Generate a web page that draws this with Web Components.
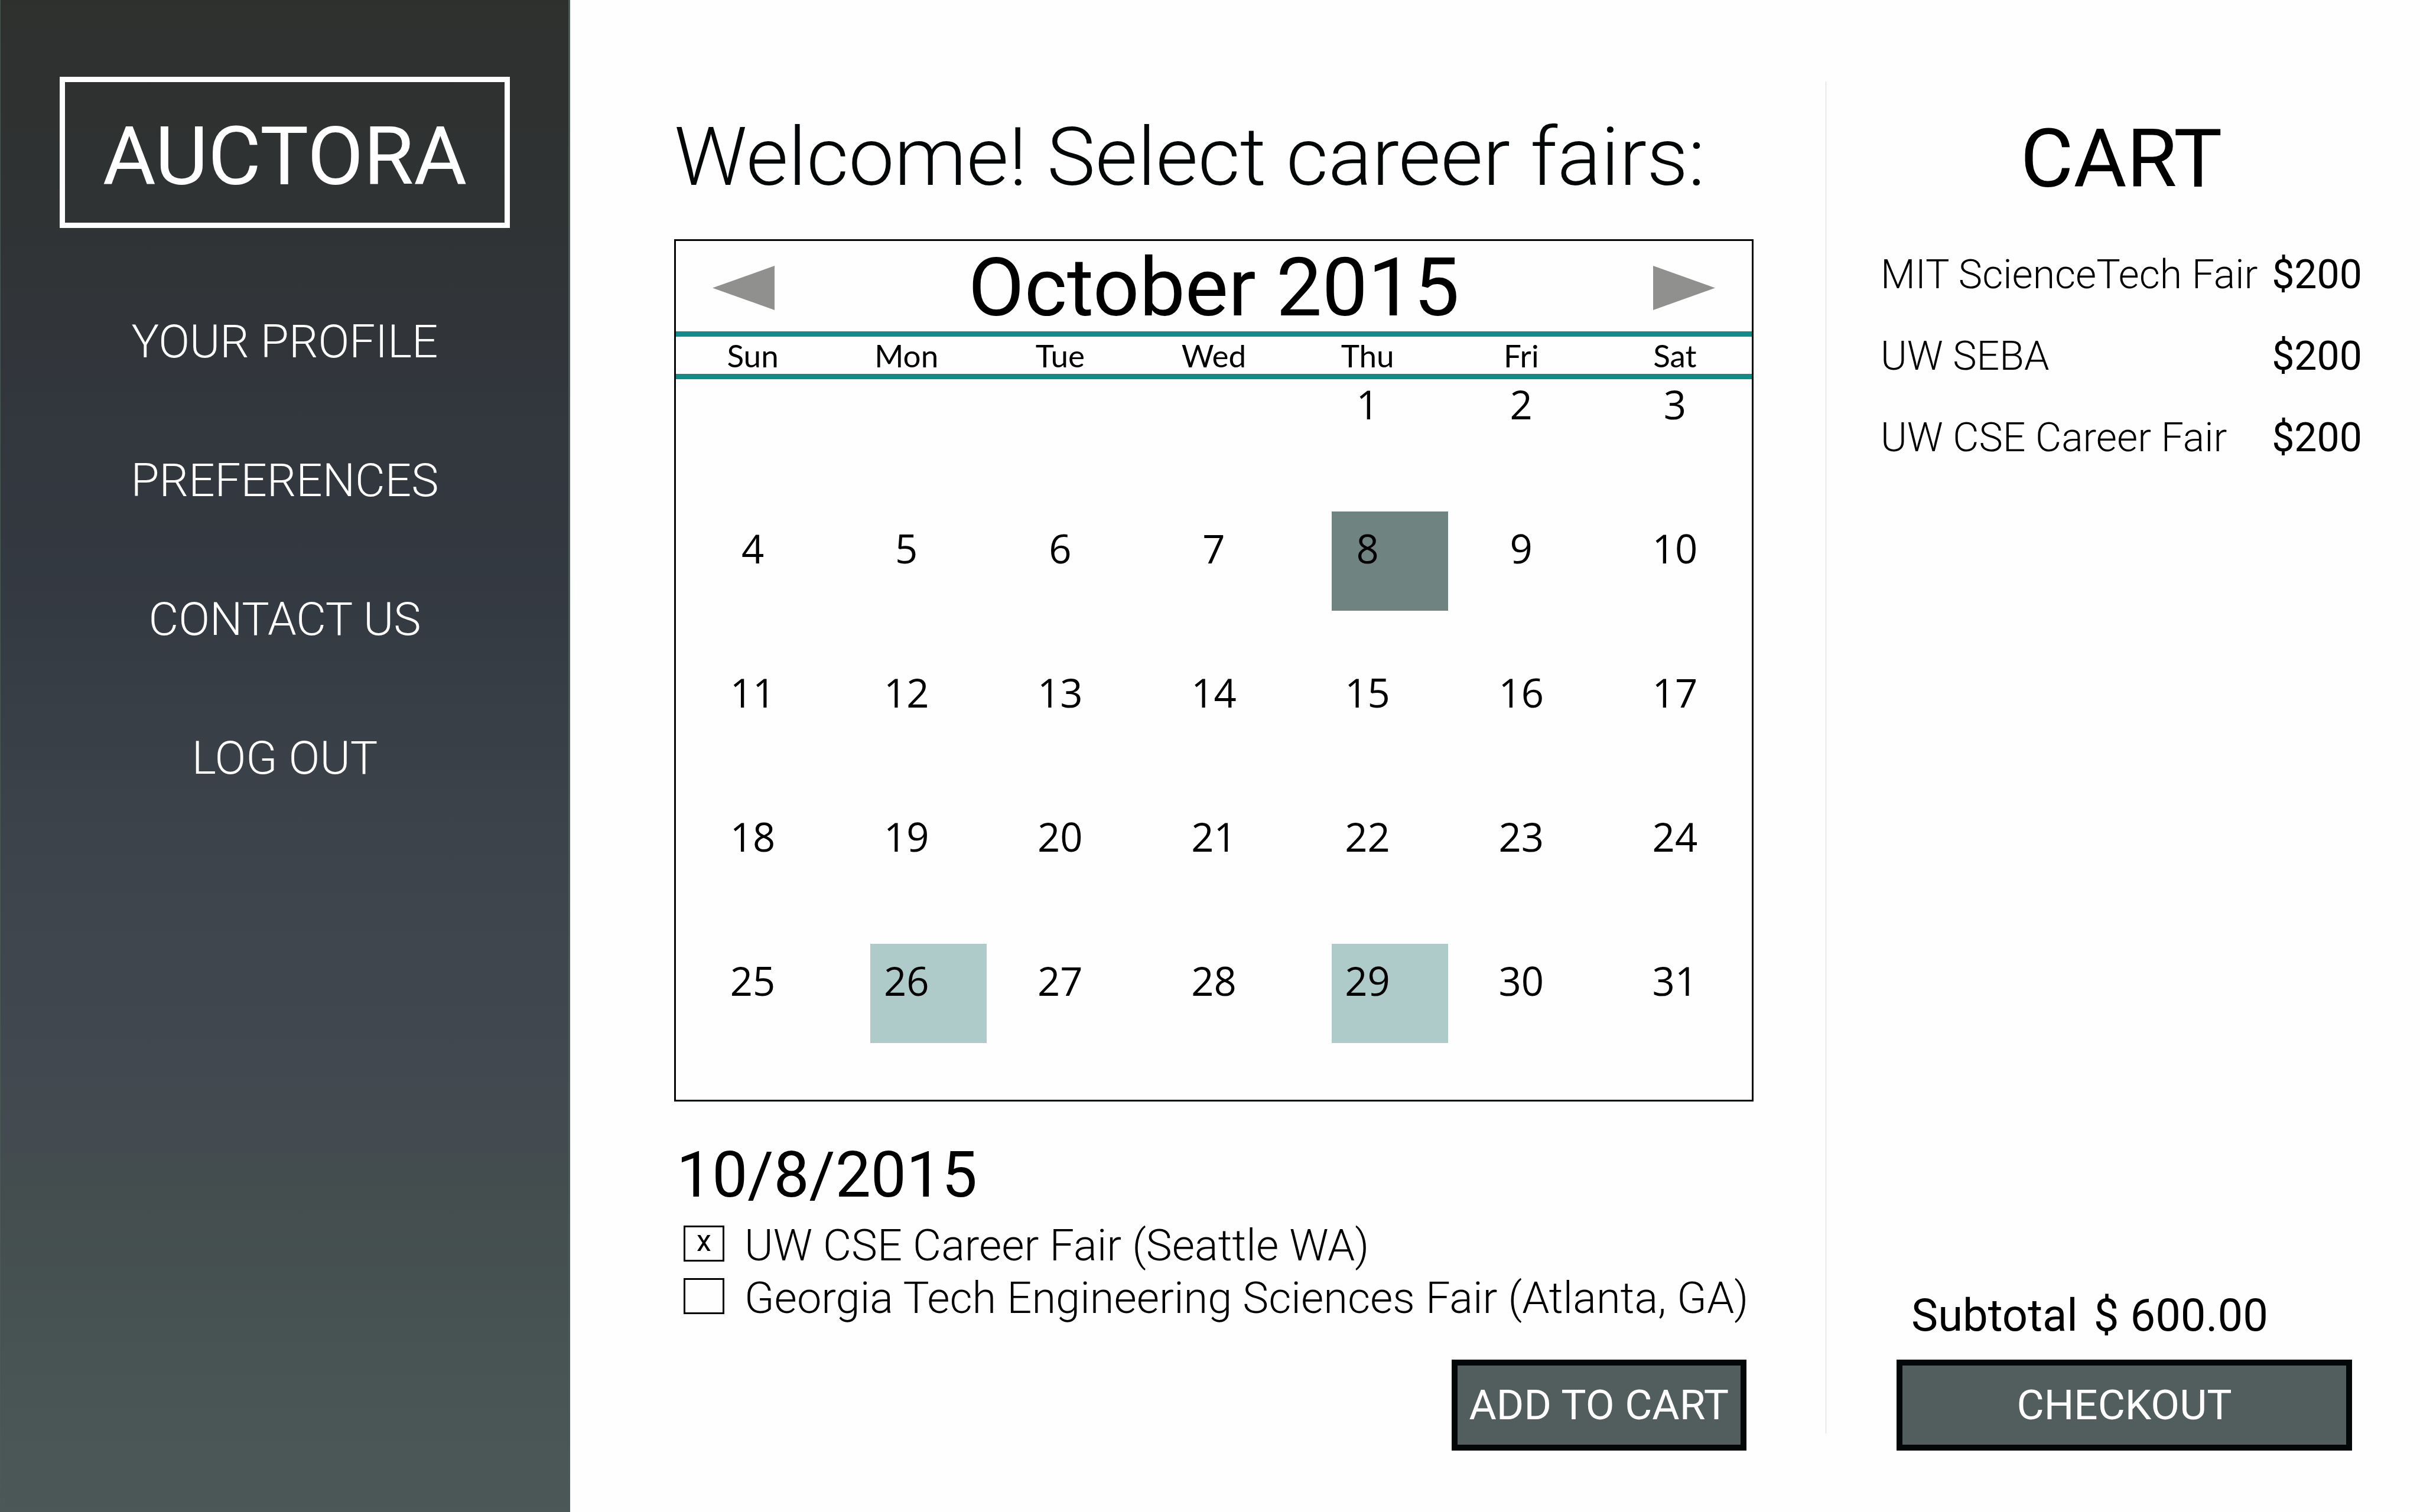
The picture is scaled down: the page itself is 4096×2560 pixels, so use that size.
<!DOCTYPE html>
<html lang="en">
<head>
<meta charset="utf-8">
<title>Auctora – Select career fairs</title>
<style>
  body { margin: 0; background: #fefefe; color: #000; font-family: Roboto, "Liberation Sans", sans-serif; }
</style>
</head>
<body>
<auctora-app>
  <side-bar slot="sidebar">
    <nav-link href="#profile">YOUR PROFILE</nav-link>
    <nav-link href="#preferences">PREFERENCES</nav-link>
    <nav-link href="#contact">CONTACT US</nav-link>
    <nav-link href="#logout">LOG OUT</nav-link>
  </side-bar>
  <fair-picker heading="Welcome! Select career fairs:" date="10/8/2015">
    <month-calendar slot="calendar" label="October 2015" start="4" days="31" selected="8" marked="26,29"></month-calendar>
    <fair-option checked>UW CSE Career Fair (Seattle WA)</fair-option>
    <fair-option>Georgia Tech Engineering Sciences Fair (Atlanta, GA)</fair-option>
    <action-button slot="action">ADD TO CART</action-button>
  </fair-picker>
  <cart-panel slot="cart" total="$ 600.00">
    <cart-item price="$200">MIT ScienceTech Fair</cart-item>
    <cart-item price="$200">UW SEBA</cart-item>
    <cart-item price="$200">UW CSE Career Fair</cart-item>
    <action-button slot="action">CHECKOUT</action-button>
  </cart-panel>
</auctora-app>

<script>
class BaseElement extends HTMLElement {
  constructor() {
    super();
    this.attachShadow({ mode: "open" });
  }
  connectedCallback() {
    this.shadowRoot.innerHTML =
      `<style>*, ::before { box-sizing: border-box; } h1, h2, ul, p { margin: 0; padding: 0; }</style>` + this.render();
  }
}

customElements.define("auctora-app", class extends BaseElement {
  render() {
    return `
    <style>
      :host { display: flex; min-height: 100vh; }
      .side { flex: none; width: 965px; display: flex; }
      main { flex: 1; min-width: 0; padding: 186px 122px 104px 176px; }
      .rule { flex: none; width: 1px; margin: 138px 0 133px; background: #dcdcdc; }
      .cart { flex: none; width: 1005px; display: flex; }
    </style>
    <div class="side"><slot name="sidebar"></slot></div>
    <main><slot></slot></main>
    <div class="rule"></div>
    <div class="cart"><slot name="cart"></slot></div>`;
  }
});

customElements.define("side-bar", class extends BaseElement {
  render() {
    return `
    <style>
      :host {
        flex: 1; box-sizing: border-box; padding: 130px 99px 0 100px; color: #fff;
        border: solid #4b5957; border-width: 0 3px 0 1px;
        background: linear-gradient(#2e302e 0%, #303334 14%, #32363d 27%, #343a42 40%, #3b4249 53%, #41474f 67%, #434a50 75%, #434d4e 78%, #4c5857 100%);
      }
      .logo { border: 9px solid #fff; padding-top: 14px; text-align: center; font-size: 138px; line-height: 224px; }
      nav { display: flex; flex-direction: column; align-items: center; gap: 135px; margin-top: 143px; }
    </style>
    <div class="logo">AUCTORA</div>
    <nav><slot></slot></nav>`;
  }
});

customElements.define("nav-link", class extends BaseElement {
  render() {
    return `
    <style>
      :host { display: block; }
      a { display: block; color: inherit; text-decoration: none; font-size: 78px; font-weight: 300; line-height: 100px; white-space: nowrap; }
    </style>
    <a href="${this.getAttribute("href")}"><slot></slot></a>`;
  }
});

customElements.define("fair-picker", class extends BaseElement {
  render() {
    return `
    <style>
      :host { display: block; }
      h1 { font-size: 138px; font-weight: 300; line-height: 160px; white-space: nowrap; color: #040707; }
      .calendar { margin-top: 59px; }
      h2 { margin-top: 63px; padding-left: 4px; font-size: 107px; font-weight: 450; line-height: 124px; }
      .options { margin-top: 12px; padding-left: 16px; }
      .action { display: flex; justify-content: flex-end; margin-top: 60px; padding-right: 12px; }
    </style>
    <h1>${this.getAttribute("heading")}</h1>
    <div class="calendar"><slot name="calendar"></slot></div>
    <h2>${this.getAttribute("date")}</h2>
    <div class="options"><slot></slot></div>
    <div class="action"><slot name="action"></slot></div>`;
  }
});

customElements.define("month-calendar", class extends BaseElement {
  render() {
    const start = +this.getAttribute("start");
    const days = +this.getAttribute("days");
    const selected = this.getAttribute("selected");
    const marked = this.getAttribute("marked").split(",");
    let rows = "";
    for (let week = 0; week * 7 < start + days; week++) {
      rows += "<tr>";
      for (let col = 0; col < 7; col++) {
        const day = week * 7 + col - start + 1;
        const state = String(day) === selected ? "selected" : marked.includes(String(day)) ? "marked" : "";
        rows += day < 1 || day > days ? "<td></td>"
          : `<td><button type="button" class="${state}"><span>${day}</span></button></td>`;
      }
      rows += "</tr>";
    }
    const names = ["Sun", "Mon", "Tue", "Wed", "Thu", "Fri", "Sat"];
    return `
    <style>
      :host { display: block; box-sizing: border-box; border: 3px solid #040707; }
      header { display: flex; align-items: center; justify-content: space-between; padding: 6px 62px 0; }
      h2 { font-size: 138px; font-weight: 450; line-height: 147px; white-space: nowrap; }
      button { border: 0; padding: 0; background: none; color: inherit; }
      svg { display: block; width: 105px; height: 75px; fill: #90908e; }
      table { width: 100%; table-layout: fixed; border-spacing: 0; }
      th, td { padding: 0; vertical-align: top; }
      th { height: 81px; border: solid #128c8a; border-width: 9px 0; font: 400 53px/63px Lato, sans-serif; }
      td { height: 244px; }
      tbody tr:first-child td { height: 224px; }
      tbody tr:last-child td { height: 264px; }
      td button { display: grid; grid-template-columns: minmax(0, 1fr); width: 100%; font: 400 67px/84px "Open Sans", sans-serif; }
      td span { grid-area: 1 / 1; padding-top: 20px; text-align: center; }
      tbody tr:first-child span { padding-top: 0; }
      .selected::before, .marked::before { content: ""; grid-area: 1 / 1; width: 197px; height: 168px; margin-left: 69px; }
      .selected::before { background: #6f8481; }
      .marked::before { background: #aecbc9; }
    </style>
    <header>
      <button type="button" aria-label="Previous month"><svg viewBox="0 0 105 75"><path d="M0 37.500L105 0V75Z"/></svg></button>
      <h2>${this.getAttribute("label")}</h2>
      <button type="button" aria-label="Next month"><svg viewBox="0 0 105 75"><path d="M105 37.500L0 0V75Z"/></svg></button>
    </header>
    <table>
      <thead><tr>${names.map(n => `<th scope="col">${n}</th>`).join("")}</tr></thead>
      <tbody>${rows}</tbody>
    </table>`;
  }
});

customElements.define("fair-option", class extends BaseElement {
  render() {
    return `
    <style>
      :host { display: block; }
      label { display: flex; align-items: center; gap: 34px; font-size: 74px; font-weight: 300; line-height: 89px; white-space: nowrap; }
      .box { display: grid; width: 69px; height: 61px; margin-bottom: 6px; }
      input { grid-area: 1 / 1; appearance: none; margin: 0; border: 3px solid #000; }
      .mark { grid-area: 1 / 1; visibility: hidden; pointer-events: none; text-align: center; font-size: 50px; font-weight: 400; line-height: 52px; }
      input:checked + .mark { visibility: visible; }
    </style>
    <label for="pick">
      <span class="box"><input id="pick" type="checkbox" ${this.hasAttribute("checked") ? "checked" : ""}>${this.hasAttribute("checked") ? `<span class="mark" aria-hidden="true">x</span>` : ""}</span>
      <slot></slot>
    </label>`;
  }
});

customElements.define("cart-panel", class extends BaseElement {
  render() {
    return `
    <style>
      :host { flex: 1; box-sizing: border-box; display: flex; flex-direction: column; padding: 189px 98px 104px 92px; }
      h2 { text-align: center; font-size: 138px; font-weight: 450; line-height: 160px; }
      .items { display: flex; flex-direction: column; gap: 58px; margin-top: 76px; }
      .total { display: flex; gap: 27px; margin-top: auto; padding-left: 52px; font-size: 76px; font-weight: 450; line-height: 88px; }
      .action { display: grid; margin: 31px 17px 0 27px; }
    </style>
    <h2>CART</h2>
    <div class="items" role="list"><slot></slot></div>
    <p class="total"><span>Subtotal</span><output>${this.getAttribute("total")}</output></p>
    <div class="action"><slot name="action"></slot></div>`;
  }
});

customElements.define("cart-item", class extends BaseElement {
  render() {
    this.setAttribute("role", "listitem");
    return `
    <style>
      :host { display: flex; justify-content: space-between; font-size: 68px; font-weight: 300; line-height: 80px; white-space: nowrap; }
      .price { font-weight: 450; }
    </style>
    <span><slot></slot></span><span class="price">${this.getAttribute("price")}</span>`;
  }
});

customElements.define("action-button", class extends BaseElement {
  render() {
    return `
    <style>
      :host { display: grid; min-width: 499px; }
      button { height: 154px; padding: 0 20px; border: 10px solid #040707; background: #525d5d; color: #fff; font: 400 71px/80px Roboto, "Liberation Sans", sans-serif; white-space: nowrap; }
    </style>
    <button type="button"><slot></slot></button>`;
  }
});
</script>
</body>
</html>
